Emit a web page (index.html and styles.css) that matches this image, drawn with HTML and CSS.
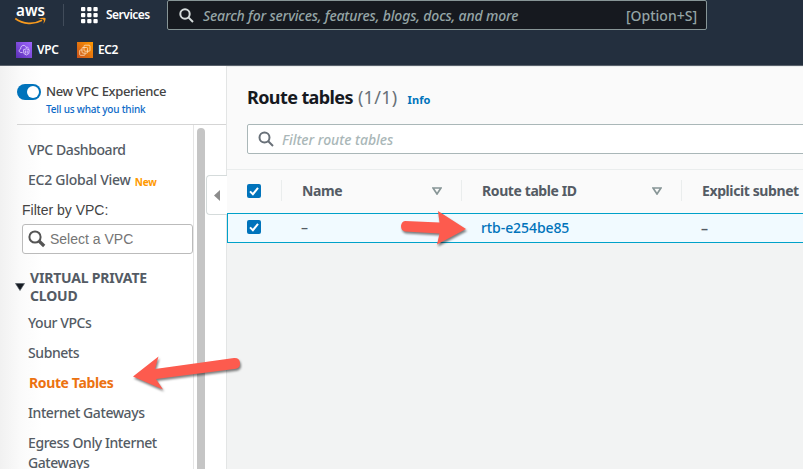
FILE: index.html
```html
<!DOCTYPE html>
<html lang="en">
<head>
<meta charset="utf-8">
<title>Route tables | VPC Console</title>
<link rel="stylesheet" href="styles.css">
</head>
<body>
<header class="header">
  <div class="topbar">
    <svg class="logo" width="32" height="24" viewBox="0 0 32 24">
      <text class="logo-text" x="1" y="14" textLength="29" lengthAdjust="spacingAndGlyphs">aws</text>
      <path d="M.3 16.500C8 22.500 19 22.800 27 18.300" fill="none" stroke="#f79a1e" stroke-width="1.700"/>
      <path d="M23.500 16.800C26 15.500 29 15.500 30.600 16.200C30.800 18.300 29.600 20.500 28.200 21.800C28.800 20 29.200 18.700 28.700 17.900C27.700 17 25.500 17.200 23.500 16.800Z" fill="#f79a1e"/>
    </svg>
    <div class="divider"></div>
    <svg class="grid-icon" width="17" height="17" viewBox="0 0 17 17" fill="#fff">
      <rect x="0" y="0" width="4.300" height="4.300" rx="1"/><rect x="6.200" y="0" width="4.300" height="4.300" rx="1"/><rect x="12.400" y="0" width="4.300" height="4.300" rx="1"/>
      <rect x="0" y="6" width="4.300" height="4.300" rx="1"/><rect x="6.200" y="6" width="4.300" height="4.300" rx="1"/><rect x="12.400" y="6" width="4.300" height="4.300" rx="1"/>
      <rect x="0" y="12" width="4.300" height="4.300" rx="1"/><rect x="6.200" y="12" width="4.300" height="4.300" rx="1"/><rect x="12.400" y="12" width="4.300" height="4.300" rx="1"/>
    </svg>
    <span class="services">Services</span>
    <div class="search">
      <svg width="15" height="15" viewBox="0 0 15 15" fill="none" stroke="#d5dbdb" stroke-width="2"><circle cx="6" cy="6" r="4.700"/><path d="M9.400 9.400L14 14"/></svg>
      <span class="search-text">Search for services, features, blogs, docs, and more</span>
      <span class="shortcut">[Option+S]</span>
    </div>
  </div>
  <nav class="favorites">
    <svg width="16" height="16" viewBox="0 0 16 16">
      <defs><linearGradient id="vpc" x1="0" y1="1" x2="1" y2="0"><stop stop-color="#5a30b5"/><stop offset="1" stop-color="#a166ff"/></linearGradient></defs>
      <rect width="16" height="16" fill="url(#vpc)"/>
      <g fill="none" stroke="#e6d9ff" stroke-width=".8"><path d="M6.500 10.500H5C2.800 10.500 2.500 7.500 4.700 7C4.300 3 9.300 2 10.200 5.500C11.500 4.800 12.500 5.500 12.700 6.500"/><path d="M7.500 7.700L10.300 6.800L13.200 7.700L12.800 11.500L10.300 13L7.900 11.500ZM9.400 8.500V11.500M11.200 8.500V11.500"/></g>
    </svg>
    <span class="fav-vpc">VPC</span>
    <svg width="16" height="16" viewBox="0 0 16 16">
      <defs><linearGradient id="ec2" x1="0" y1="1" x2="1" y2="0"><stop stop-color="#c8511b"/><stop offset="1" stop-color="#ff9900"/></linearGradient></defs>
      <rect width="16" height="16" fill="url(#ec2)"/>
      <g fill="none" stroke="#ffe3c2" stroke-width=".8"><rect x="7" y="3.200" width="6" height="6" rx="1"/><rect x="5" y="5.500" width="5.600" height="5.600" rx="1"/><path d="M5 8H3.500Q2.700 8 2.700 8.800V12.500Q2.700 13.300 3.500 13.300H7.200Q8 13.300 8 12.500V11.100"/></g>
    </svg>
    <span>EC2</span>
  </nav>
</header>

<div class="content">
  <aside class="sidebar">
    <div class="experience">
      <span class="toggle"></span>
      <div>
        <div class="exp-title">New VPC Experience</div>
        <div class="exp-link">Tell us what you think</div>
      </div>
    </div>
    <div class="nav-row">
      <nav class="nav">
        <a class="item dashboard">VPC Dashboard</a>
        <a class="item global"><span>EC2 Global View</span><b class="new">New</b></a>
        <div class="filter-label">Filter by VPC:</div>
        <div class="vpc-select">
          <svg width="18" height="18" viewBox="0 0 18 18" fill="none" stroke="#555"><circle cx="7" cy="7" r="5.600" stroke-width="2"/><path d="M11 11L16.200 16" stroke-width="3.200"/></svg>
          <span>Select a VPC</span>
        </div>
        <div class="section">
          <svg width="10" height="8" viewBox="0 0 10 8"><path d="M.5 .5H9.500L5 7.500Z" fill="#161b22" stroke="#545b64" stroke-width=".7"/></svg>
          <span>VIRTUAL PRIVATE<br>CLOUD</span>
        </div>
        <a class="item vpcs">Your VPCs</a>
        <a class="item subnets">Subnets</a>
        <a class="item active">Route Tables</a>
        <a class="item gateways">Internet Gateways</a>
        <a class="item egress">Egress Only Internet<br>Gateways</a>
      </nav>
      <div class="track"><div class="thumb"></div></div>
    </div>
    <div class="collapse"><svg width="6" height="11" viewBox="0 0 6 11"><path d="M6 0V11L0 5.500Z" fill="#8c8c8c"/></svg></div>
  </aside>

  <main class="main">
    <div class="panel-head">
      <h1 class="title"><span class="title-text">Route tables</span><span class="count">(1/1)</span><span class="info">Info</span></h1>
      <div class="filter">
        <svg width="16" height="16" viewBox="0 0 16 16" fill="none" stroke="#687078" stroke-width="2"><circle cx="6.500" cy="6.500" r="5"/><path d="M10 10L15 15"/></svg>
        <span>Filter route tables</span>
      </div>
    </div>
    <div class="row thead">
      <div class="check-cell"><svg class="check" viewBox="0 0 14 14"><path d="M3 7.400L5.900 10.200L11 3.800"/></svg></div>
      <div class="cell"><span class="h-name">Name</span><svg class="sort" viewBox="0 0 10 8"><path d="M1 1H9L5 7Z"/></svg></div>
      <div class="cell"><span class="h-id">Route table ID</span><svg class="sort" viewBox="0 0 10 8"><path d="M1 1H9L5 7Z"/></svg></div>
      <div class="cell"><span class="h-subnet">Explicit subnet</span></div>
    </div>
    <div class="row selected">
      <div class="check-cell"><svg class="check" viewBox="0 0 14 14"><path d="M3 7.400L5.900 10.200L11 3.800"/></svg></div>
      <div class="cell">–</div>
      <div class="cell link">rtb-e254be85</div>
      <div class="cell dash">–</div>
    </div>
  </main>
</div>

<svg class="arrows" width="803" height="469" viewBox="0 0 803 469" fill="#fd5b4e">
  <path d="M405 220.900L439.500 222.600L438 211L466 229L437 244.500L439.500 233.500L405 231.500Q401 230.500 401 226Q401.500 221.500 405 220.900Z"/>
  <path d="M133 376.500L158.500 356.500L155 369L234 358Q239.500 357.500 240 363Q240.500 367.500 236 368.700L156 379L163 389.500Z"/>
</svg>
</body>
</html>
```

FILE: styles.css
```css
* { box-sizing: border-box; }
body {
  margin: 0; width: 803px; height: 469px; overflow: hidden; position: relative;
  font: 14px/18px "Noto Sans", sans-serif; color: #545b64; background: #fff;
}
svg { display: block; flex: none; }
span, a { white-space: nowrap; }

.header { height: 66px; background: #232f3e; border-bottom: 1px solid #59616b; color: #fff; font-weight: 600; }
.topbar { display: flex; height: 30px; }
.logo { margin: 2px 0 0 15px; overflow: visible; }
.logo-text { font: 600 16px "Noto Sans", sans-serif; fill: #fff; }
.divider { width: 1px; height: 22px; margin: 4px 17px 0 16px; background: #414c5a; }
.grid-icon { margin-top: 7px; }
.services { margin: 6px 0 0 8px; width: 61px; font-size: 12px; letter-spacing: -.5px; }
.search {
  display: flex; align-items: center; width: 540px; height: 30px; padding: 0 9px 0 11px;
  background: #16191f; border: 1px solid #879596; border-radius: 2px;
  color: #95a5a6; font-weight: 500; line-height: 28px;
}
.search-text { margin: 2px 0 0 9px; font-style: italic; letter-spacing: -.15px; }
.shortcut { margin: 2px 0 0 auto; letter-spacing: 0; }
.favorites { display: flex; align-items: center; height: 16px; margin: 12px 0 0 16px; font-size: 12px; }
.favorites span { margin-left: 5px; letter-spacing: -.4px; }
.favorites .fav-vpc { width: 40px; }

.content { display: flex; height: 403px; }
.sidebar {
  position: relative; width: 227px; flex: none;
  background: linear-gradient(90deg, #f1f1f1 0, #fafafa 20px, #fff 42px);
  border-right: 1px solid #e3e5e5;
}
.experience { display: flex; margin-left: 17px; height: 59px; padding-top: 16px; border-bottom: 1px solid #d5d5d5; }
.toggle { width: 24px; height: 16px; margin: 2px 5px 0 0; border-radius: 8px; background: #0073bb; position: relative; }
.toggle::after { content: ""; position: absolute; right: 2px; top: 2px; width: 12px; height: 12px; border-radius: 50%; background: #fff; }
.exp-title { font-size: 13px; font-weight: 500; color: #444; letter-spacing: -.38px; }
.exp-link { font-size: 10px; font-weight: 500; color: #0b69c7; letter-spacing: -.2px; }
.nav-row { display: flex; height: 344px; }
.nav { width: 193px; flex: none; padding-top: 16px; }
.item { display: block; height: 30px; padding-left: 28px; font-weight: 500; letter-spacing: -.42px; }
.global { display: flex; letter-spacing: -.25px; }
.new { margin: 2px 0 0 4px; font-size: 10px; color: #ff9900; letter-spacing: -.1px; }
.filter-label { margin-left: 22px; height: 23px; color: #444; font: 14px/18px "Liberation Sans", sans-serif; }
.vpc-select {
  display: flex; align-items: center; width: 171px; height: 30px; margin-left: 22px; padding-left: 5px;
  border: 1px solid #bbb; border-radius: 3px; background: #fff;
  font: 14px/28px "Liberation Sans", sans-serif; color: #757575;
}
.vpc-select span { margin-left: 4px; }
.section { display: flex; margin: 15px 0 9px 15px; font-weight: 700; }
.section svg { margin: 14px 5px 0 0; }
.section span { letter-spacing: -.2px; }
.active { font-weight: 700; color: #ec7211; padding-left: 29px; letter-spacing: -.38px; }
.egress { height: 40px; line-height: 20px; margin-top: -1px; }
.track { width: 34px; border-left: 1px solid #e5e5e5; padding: 3px 0 0 3px; }
.thumb { width: 8px; height: 345px; border-radius: 4px; background: #c5c5c5; }
.collapse {
  position: absolute; left: 206px; top: 109px; width: 21px; height: 40px;
  display: flex; align-items: center; padding-left: 7px;
  border: 1px solid #d5dbdb; border-right: 0; border-radius: 4px 0 0 4px; background: #fff;
}

.main { width: 576px; background: #f2f3f3; overflow: hidden; }
.panel-head { height: 103px; padding: 19px 0 0 20px; background: #fafafa; border-top: 1px solid #eaeded; }
.title { display: flex; margin: 0; height: 38px; font-size: 18px; line-height: 22px; color: #16191f; }
.title-text { letter-spacing: -.6px; }
.count { margin-left: 5px; font-weight: 400; color: #687078; letter-spacing: .3px; }
.info { margin: 3px 0 0 10px; font-size: 11px; color: #0073bb; letter-spacing: .1px; }
.filter {
  display: flex; align-items: center; width: 600px; height: 30px; padding-left: 10px;
  border: 1px solid #aab7b8; border-radius: 2px; background: #fff; color: #aab7b8; font-style: italic; font-weight: 500;
}
.filter span { margin: 2px 0 0 8px; letter-spacing: -.03px; }
.row { display: grid; grid-template-columns: 54px 180px 220px 122px; align-items: center; }
.thead { height: 44px; padding-bottom: 2px; background: #fafafa; border-top: 1px solid #eaeded; font-weight: 700; }
.check-cell { padding-left: 20px; }
.check { width: 14px; height: 14px; border-radius: 2px; background: #0073bb; }
.check path { fill: none; stroke: #fff; stroke-width: 2; }
.cell { display: flex; align-items: center; height: 21px; padding: 0 19px 0 20px; letter-spacing: -.4px; }
.thead .cell { border-left: 1px solid #eaeded; }
.sort { width: 10px; height: 8px; margin-left: auto; }
.sort path { fill: none; stroke: #879596; stroke-width: 1.700; }
.selected { height: 30px; background: #f1faff; border: 1px solid #00a1c9; border-right: 0; grid-template-columns: 53px 180px 220px 122px; }
.selected .check-cell { padding: 0 0 2px 19px; }
.selected .cell { font-weight: 500; }
.selected .link { color: #0073bb; letter-spacing: -.08px; }
.selected .dash { font-weight: 600; padding-bottom: 1px; }

.arrows { position: absolute; left: 0; top: 0; filter: drop-shadow(1px 2px 1px rgba(0, 0, 0, .5)); pointer-events: none; }
```
